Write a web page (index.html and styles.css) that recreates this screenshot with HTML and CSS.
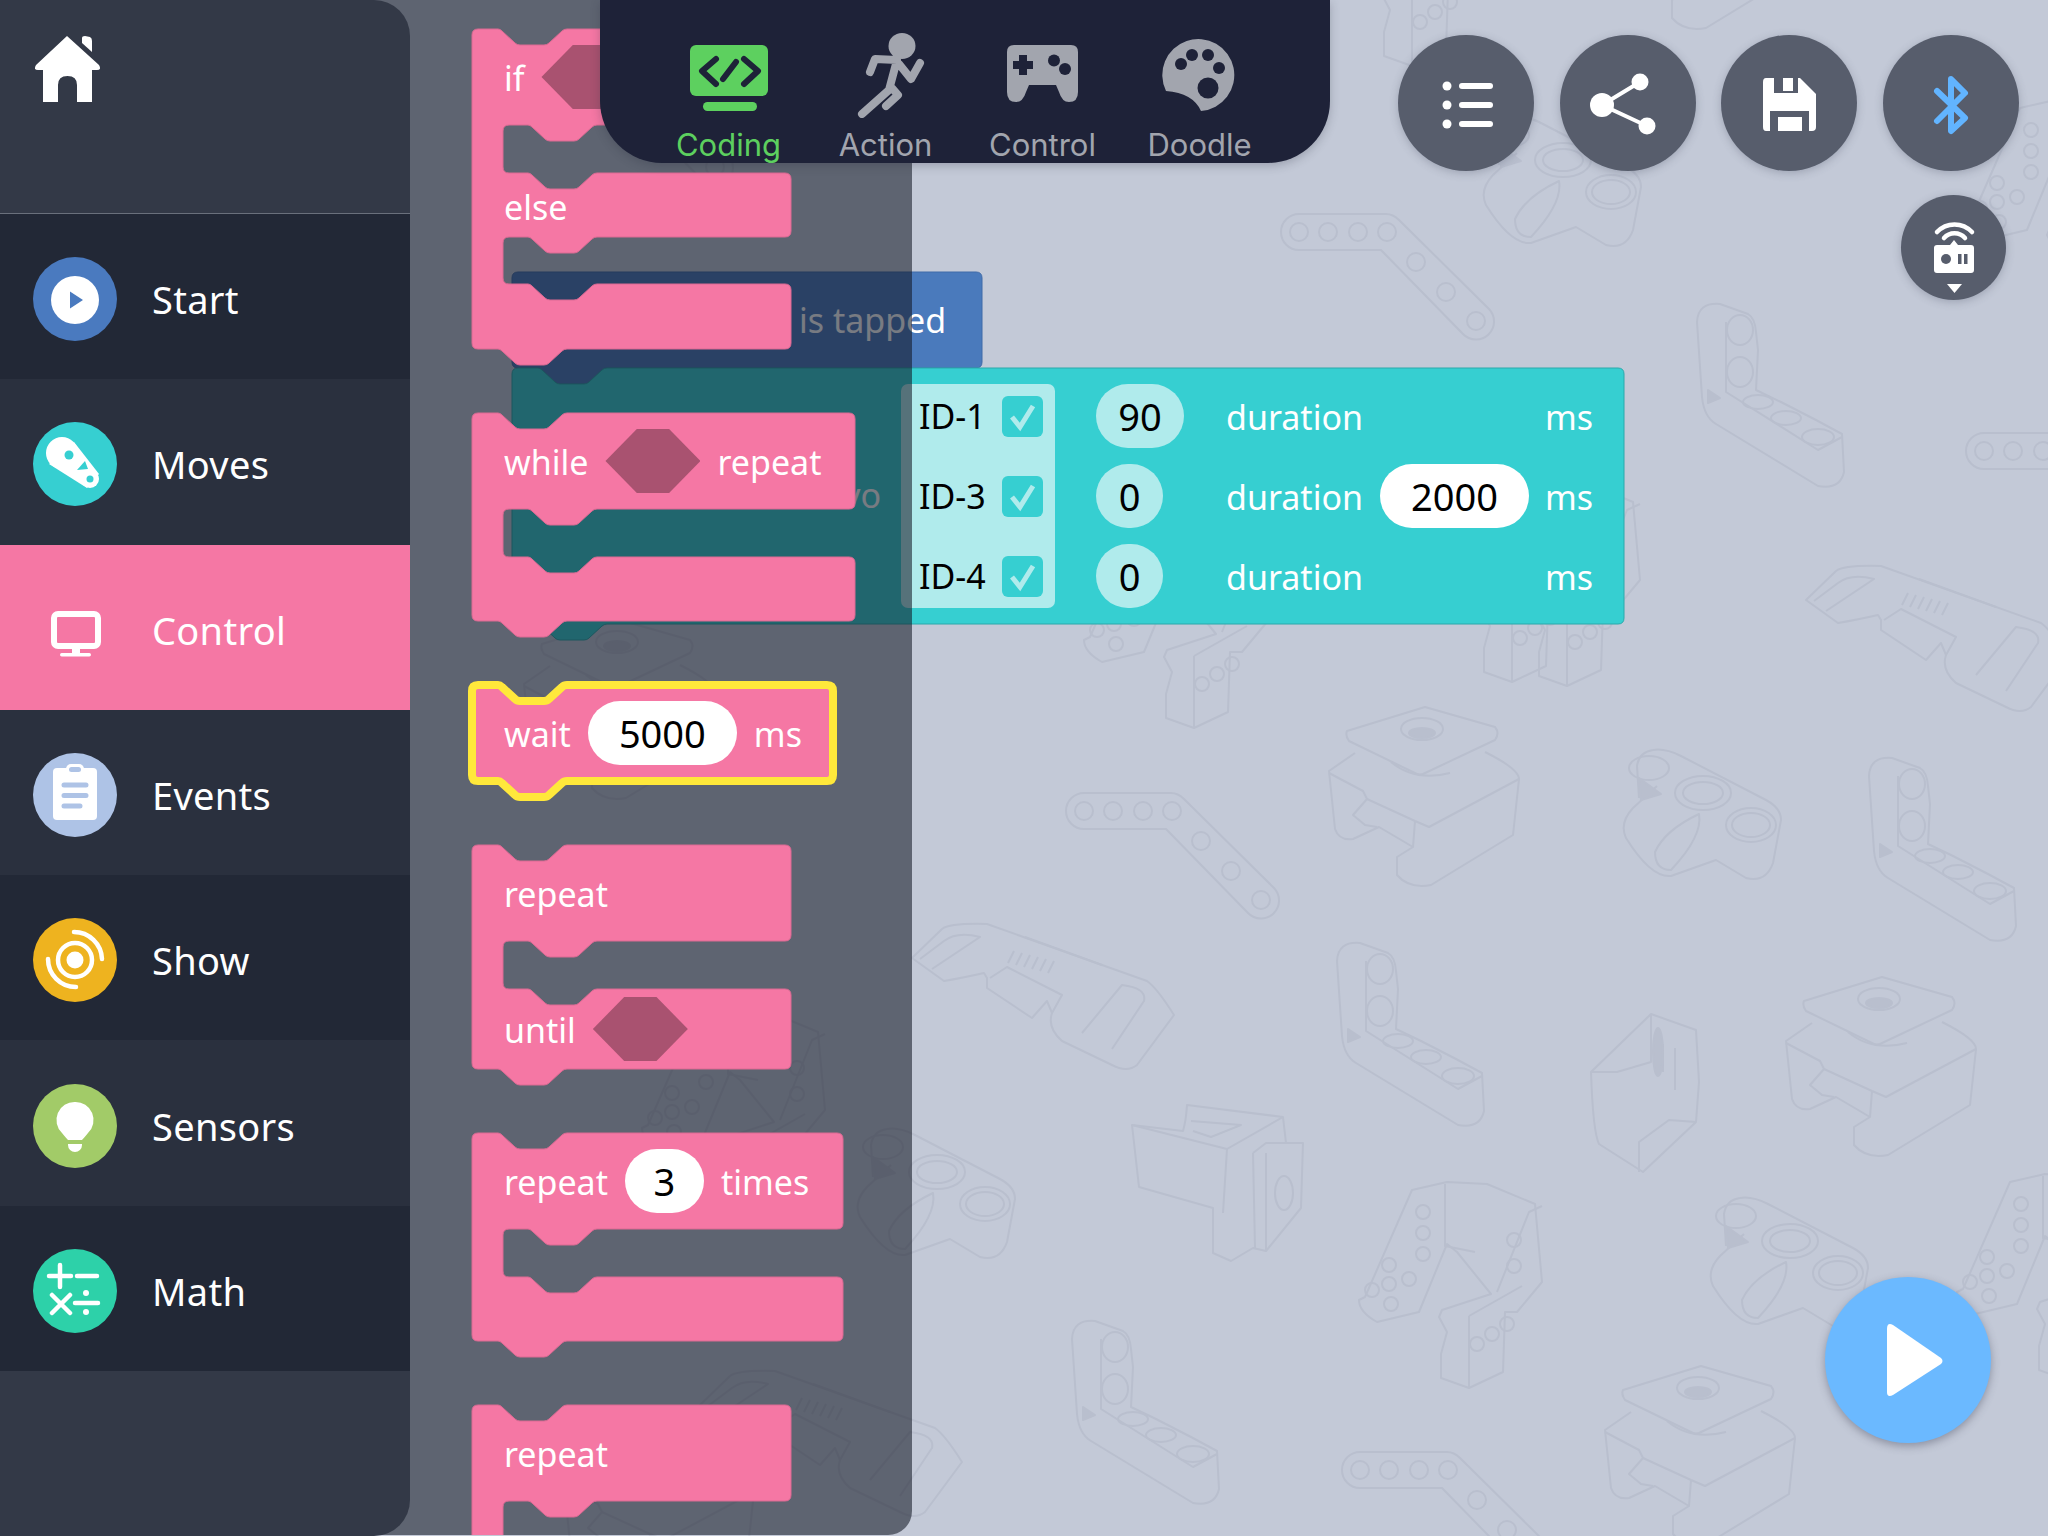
FILE: index.html
```html
<!DOCTYPE html>
<html lang="en">
<head>
  <meta charset="UTF-8">
  <title>Coding</title>
  <link rel="stylesheet" href="styles.css">
</head>
<body>
  <svg class="parts" viewBox="0 0 2048 1536" width="2048" height="1536">
    <defs>
      <g id="beam">
        <path d="M18 0H105Q112 0 118 6L208 95A18 18 0 0 1 182 120L100 36H18A18 18 0 0 1 18 0Z"/>
        <circle cx="18" cy="18" r="9"/><circle cx="47" cy="18" r="9"/><circle cx="77" cy="18" r="9"/><circle cx="106" cy="18" r="9"/>
        <circle cx="135" cy="48" r="9"/><circle cx="165" cy="78" r="9"/><circle cx="195" cy="107" r="9"/>
      </g>
      <g id="servo">
        <path d="M22 24L100 0L170 20Q175 26 170 33L98 67Q95 68 92 67L24 34Q20 28 22 24Z"/>
        <ellipse cx="97" cy="22" rx="21" ry="11"/>
        <ellipse class="solid" cx="97" cy="26" rx="13" ry="5"/>
        <path d="M30 46L4 64L10 122Q14 134 28 132L54 120L88 140L72 150V168Q84 182 106 178L188 128L194 72Q194 62 160 45"/>
        <path d="M4 66L38 84L42 92L90 114L104 120L194 72M90 114L88 140M42 92L28 108L40 118L52 120"/>
        <path d="M66 55Q90 75 125 66"/>
      </g>
      <g id="hub">
        <path d="M18 50L16 18Q18 4 32 2Q44 0 60 8L145 52Q160 60 160 72L152 115Q145 135 125 130L95 112L50 128Q30 130 5 90Q-2 75 12 60L36 38"/>
        <ellipse cx="28" cy="20" rx="20" ry="12"/>
        <ellipse cx="82" cy="45" rx="28" ry="17"/><ellipse cx="82" cy="45" rx="20" ry="11"/>
        <ellipse cx="130" cy="77" rx="25" ry="17"/><ellipse cx="130" cy="77" rx="19" ry="12"/>
        <path d="M78 66Q82 88 50 122Q34 122 34 104Q44 82 78 66Z"/>
        <path class="solid" d="M18 30L40 46L20 52Z"/>
      </g>
      <g id="larm">
        <path d="M1 20Q2 0 24 2L52 12Q59 16 60 30L62 48L60 88L85 100L120 118L146 132L148 170Q144 188 122 184L20 122Q8 115 6 95Z"/>
        <ellipse cx="44" cy="28" rx="13" ry="15"/><ellipse cx="44" cy="70" rx="13" ry="15"/>
        <ellipse cx="62" cy="100" rx="15" ry="7"/><ellipse cx="90" cy="116" rx="15" ry="7"/><ellipse cx="122" cy="135" rx="16" ry="8"/>
        <path d="M30 20V90L122 148L146 135"/>
        <path class="solid" d="M12 88L24 96L12 101Z"/>
      </g>
      <g id="plate">
        <path d="M0 35L30 6Q38 0 75 1L235 58Q245 65 262 92L225 142Q215 150 200 142L150 118Q135 105 140 90L135 78L120 95L75 65V55L72 50Q50 55 32 58Z"/>
        <path d="M8 36L32 18Q45 8 68 14L20 46M113 14L190 42M170 110L210 62Q235 65 232 78L200 126M78 55L95 44L150 72L140 90"/>
        <path d="M102 28L96 40M110 30L104 42M118 32L112 44M126 34L120 46M134 36L128 48M142 38L136 50"/>
      </g>
      <g id="bracket">
        <path d="M1 22L52 28Q55 18 56 2L152 14L155 40L172 40L170 105L135 148L122 145L100 158L82 150V105L8 84Z"/>
        <path d="M1 22L96 46L152 14M96 46L92 110M60 18L110 22L80 34L62 28M122 50L135 40L172 40M122 50L124 145M135 50V148"/>
        <ellipse cx="153" cy="90" rx="9" ry="17"/>
      </g>
      <g id="joint">
        <path d="M8 115L55 8L90 0L130 2L178 22L185 100L160 130L148 130L146 190L112 206L84 196L84 172L90 150L82 135L85 128L134 112L100 70L90 62L62 130L20 140Q2 130 2 118Z"/>
        <path d="M88 2V64L118 70M140 110L172 30L185 24M112 134V205M112 134L165 104"/>
        <circle cx="66" cy="30" r="7"/><circle cx="66" cy="51" r="7"/><circle cx="66" cy="72" r="7"/>
        <circle cx="32" cy="83" r="7"/><circle cx="52" cy="97" r="7"/><circle cx="15" cy="108" r="7"/><circle cx="32" cy="102" r="7"/><circle cx="34" cy="122" r="7"/>
        <circle cx="157" cy="58" r="7"/><circle cx="157" cy="84" r="7"/>
        <circle cx="120" cy="162" r="7"/><circle cx="135" cy="152" r="7"/><circle cx="150" cy="142" r="7"/>
      </g>
      <g id="cube">
        <path d="M0 60L60 2L105 18L108 70L105 110L52 160L8 132Q2 120 0 60Z"/>
        <path d="M60 2V50L26 60L0 60M105 110L78 108L48 130V160M84 36V78M72 32V60"/>
        <ellipse class="solid" cx="67" cy="40" rx="5" ry="24"/>
      </g>
    </defs>
    <use href="#beam" x="1066" y="793"/>
    <use href="#beam" x="1281" y="214"/>
    <use href="#beam" x="1966" y="433"/>
    <use href="#beam" x="1342" y="1452"/>
    <use href="#beam" x="520" y="60"/>
    <use href="#servo" x="1325" y="707"/>
    <use href="#servo" x="1782" y="977"/>
    <use href="#servo" x="1601" y="1366"/>
    <use href="#servo" x="1600" y="-150"/>
    <use href="#servo" x="560" y="1420"/>
    <use href="#servo" x="520" y="620"/>
    <use href="#hub" x="1621" y="748"/>
    <use href="#hub" x="1708" y="1196"/>
    <use href="#hub" x="1481" y="115"/>
    <use href="#hub" x="855" y="1127"/>
    <use href="#larm" x="1336" y="941"/>
    <use href="#larm" x="1868" y="756"/>
    <use href="#larm" x="1696" y="302"/>
    <use href="#larm" x="1071" y="1319"/>
    <use href="#plate" x="912" y="923"/>
    <use href="#plate" x="1806" y="565"/>
    <use href="#plate" x="700" y="1370"/>
    <use href="#bracket" x="1131" y="1103"/>
    <use href="#joint" x="1357" y="1182"/>
    <use href="#joint" x="1955" y="1174"/>
    <use href="#joint" x="1082" y="522"/>
    <use href="#joint" x="1400" y="476"/>
    <use href="#joint" x="1300" y="-140"/>
    <use href="#joint" x="1965" y="100"/>
    <use href="#joint" x="1455" y="480"/>
    <use href="#joint" x="640" y="1010"/>
    <use href="#cube" x="1591" y="1012"/>
  </svg>

  <!-- blocks left on the workspace -->
  <div class="canvas-block tapped-block">
    <svg class="block-shape" width="470" height="96"><path d="M6 0H464Q470 0 470 6V90Q470 96 464 96H95Q92 96 90 98L77 110Q75 112 72 112H48Q45 112 43 110L30 98Q28 96 26 96H6Q0 96 0 90V6Q0 0 6 0Z"/></svg>
    <span class="tapped-label">is tapped</span>
  </div>
  <div class="canvas-block servo-block">
    <svg class="block-shape" width="1112" height="256"><path d="M6 0H26Q28 0 30 2L43 14Q45 16 48 16H72Q75 16 77 14L90 2Q92 0 95 0H1106Q1112 0 1112 6V250Q1112 256 1106 256H95Q92 256 90 258L77 270Q75 272 72 272H48Q45 272 43 270L30 258Q28 256 26 256H6Q0 256 0 250V6Q0 0 6 0Z"/></svg>
    <div class="servo-inner">
      <div class="servo-title">move servo</div>
      <div class="id-panel">
        <div class="id-row"><span>ID-1</span><span class="check"><svg viewBox="0 0 41 41" width="41" height="41"><path d="M10 21L18 31L31 10"/></svg></span></div>
        <div class="id-row"><span>ID-3</span><span class="check"><svg viewBox="0 0 41 41" width="41" height="41"><path d="M10 21L18 31L31 10"/></svg></span></div>
        <div class="id-row"><span>ID-4</span><span class="check"><svg viewBox="0 0 41 41" width="41" height="41"><path d="M10 21L18 31L31 10"/></svg></span></div>
      </div>
      <div class="servo-params">
        <span class="pill pill-light pill-90">90</span><span class="param-text">duration</span><span></span><span class="param-text unit">ms</span>
        <span class="pill pill-light pill-0">0</span><span class="param-text">duration</span><span class="pill pill-white pill-big">2000</span><span class="param-text unit">ms</span>
        <span class="pill pill-light pill-0">0</span><span class="param-text">duration</span><span></span><span class="param-text unit">ms</span>
      </div>
    </div>
  </div>

  <!-- block palette -->
  <div class="flyout">
    <div class="block block-if">
      <svg class="block-shape"><path d="M6 0H26Q28 0 30 2L43 14Q45 16 48 16H72Q75 16 77 14L90 2Q92 0 95 0H313Q319 0 319 6V90Q319 96 313 96H125Q122 96 120 98L107 110Q105 112 102 112H78Q75 112 73 110L60 98Q58 96 56 96H37Q31 96 31 102V138Q31 144 37 144H56Q58 144 60 146L73 158Q75 160 78 160H102Q105 160 107 158L120 146Q122 144 125 144H313Q319 144 319 150V202Q319 208 313 208H125Q122 208 120 210L107 222Q105 224 102 224H78Q75 224 73 222L60 210Q58 208 56 208H37Q31 208 31 214V249Q31 255 37 255H56Q58 255 60 257L73 269Q75 271 78 271H102Q105 271 107 269L120 257Q122 255 125 255H313Q319 255 319 261V314Q319 320 313 320H95Q92 320 90 322L77 334Q75 336 72 336H48Q45 336 43 334L30 322Q28 320 26 320H6Q0 320 0 314V6Q0 0 6 0Z"/></svg>
      <div class="block-row"><span class="label">if</span><span class="hex"></span></div>
      <div class="block-row block-row-short"><span class="label">else</span></div>
    </div>

    <div class="block block-while">
      <svg class="block-shape"><path d="M6 0H26Q28 0 30 2L43 14Q45 16 48 16H72Q75 16 77 14L90 2Q92 0 95 0H377Q383 0 383 6V90Q383 96 377 96H125Q122 96 120 98L107 110Q105 112 102 112H78Q75 112 73 110L60 98Q58 96 56 96H37Q31 96 31 102V138Q31 144 37 144H56Q58 144 60 146L73 158Q75 160 78 160H102Q105 160 107 158L120 146Q122 144 125 144H377Q383 144 383 150V202Q383 208 377 208H95Q92 208 90 210L77 222Q75 224 72 224H48Q45 224 43 222L30 210Q28 208 26 208H6Q0 208 0 202V6Q0 0 6 0Z"/></svg>
      <div class="block-row"><span class="label">while</span><span class="hex"></span><span class="label">repeat</span></div>
    </div>

    <div class="block block-wait">
      <svg class="block-shape"><path d="M6 0H26Q28 0 30 2L43 14Q45 16 48 16H72Q75 16 77 14L90 2Q92 0 95 0H355Q361 0 361 6V90Q361 96 355 96H95Q92 96 90 98L77 110Q75 112 72 112H48Q45 112 43 110L30 98Q28 96 26 96H6Q0 96 0 90V6Q0 0 6 0Z"/></svg>
      <div class="block-row"><span class="label">wait</span><span class="pill pill-white pill-big">5000</span><span class="label">ms</span></div>
    </div>

    <div class="block block-until">
      <svg class="block-shape"><path d="M6 0H26Q28 0 30 2L43 14Q45 16 48 16H72Q75 16 77 14L90 2Q92 0 95 0H313Q319 0 319 6V90Q319 96 313 96H125Q122 96 120 98L107 110Q105 112 102 112H78Q75 112 73 110L60 98Q58 96 56 96H37Q31 96 31 102V138Q31 144 37 144H56Q58 144 60 146L73 158Q75 160 78 160H102Q105 160 107 158L120 146Q122 144 125 144H313Q319 144 319 150V218Q319 224 313 224H95Q92 224 90 226L77 238Q75 240 72 240H48Q45 240 43 238L30 226Q28 224 26 224H6Q0 224 0 218V6Q0 0 6 0Z"/></svg>
      <div class="block-row"><span class="label">repeat</span></div>
      <div class="block-row block-row-until"><span class="label">until</span><span class="hex"></span></div>
    </div>

    <div class="block block-times">
      <svg class="block-shape"><path d="M6 0H26Q28 0 30 2L43 14Q45 16 48 16H72Q75 16 77 14L90 2Q92 0 95 0H365Q371 0 371 6V90Q371 96 365 96H125Q122 96 120 98L107 110Q105 112 102 112H78Q75 112 73 110L60 98Q58 96 56 96H37Q31 96 31 102V138Q31 144 37 144H56Q58 144 60 146L73 158Q75 160 78 160H102Q105 160 107 158L120 146Q122 144 125 144H365Q371 144 371 150V202Q371 208 365 208H95Q92 208 90 210L77 222Q75 224 72 224H48Q45 224 43 222L30 210Q28 208 26 208H6Q0 208 0 202V6Q0 0 6 0Z"/></svg>
      <div class="block-row"><span class="label">repeat</span><span class="pill pill-white pill-3">3</span><span class="label">times</span></div>
    </div>

    <div class="block block-repeat">
      <svg class="block-shape"><path d="M6 0H26Q28 0 30 2L43 14Q45 16 48 16H72Q75 16 77 14L90 2Q92 0 95 0H313Q319 0 319 6V90Q319 96 313 96H125Q122 96 120 98L107 110Q105 112 102 112H78Q75 112 73 110L60 98Q58 96 56 96H37Q31 96 31 102V138Q31 144 37 144H56Q58 144 60 146L73 158Q75 160 78 160H102Q105 160 107 158L120 146Q122 144 125 144H313Q319 144 319 150V202Q319 208 313 208H6Q0 208 0 202V6Q0 0 6 0Z"/></svg>
      <div class="block-row"><span class="label">repeat</span></div>
    </div>
  </div>

  <nav class="sidebar">
    <div class="sidebar-head">
      <svg class="home-icon" viewBox="0 0 135 120" width="135" height="120">
        <path d="M67 36L36 65Q33 70 38 70H43V102H58V85Q58 76 67.5 76Q77 76 77 85V102H92V70H97Q102 70 99 65Z"/>
        <path d="M82 38Q82 36 85 36L90 37Q92 38 92 41V52L82 43Z"/>
      </svg>
    </div>
    <div class="cat cat-dark">
      <svg viewBox="0 0 84 84" width="84" height="84"><circle cx="42" cy="42" r="42" fill="#4a7abf"/><circle cx="42" cy="43" r="24" fill="#fff"/><path d="M37 34.5L50 43L37 51.5Z" fill="#4a7abf"/></svg>
      <span>Start</span>
    </div>
    <div class="cat">
      <svg viewBox="0 0 84 84" width="84" height="84"><circle cx="42" cy="42" r="42" fill="#36cfd1"/><circle cx="29" cy="31" r="16" fill="#fff"/><circle cx="57" cy="57" r="9" fill="#fff"/><path d="M41 20L66 52L54 66L16 42Z" fill="#fff"/><circle cx="36" cy="33" r="4.5" fill="#36cfd1"/><circle cx="57" cy="57" r="3.5" fill="#36cfd1"/><path d="M44 48L52 39L55 47Z" fill="#36cfd1"/></svg>
      <span>Moves</span>
    </div>
    <div class="cat cat-active">
      <svg viewBox="0 0 84 84" width="84" height="84"><rect x="21" y="26" width="44" height="32" rx="4" fill="none" stroke="#fff" stroke-width="6"/><rect x="39" y="60" width="8" height="7" fill="#fff"/><rect x="27" y="65" width="31" height="3.5" rx="1.7" fill="#fff"/></svg>
      <span>Control</span>
    </div>
    <div class="cat">
      <svg viewBox="0 0 84 84" width="84" height="84"><circle cx="42" cy="42" r="42" fill="#aec3e6"/><rect x="20" y="15" width="44" height="52" rx="4" fill="#fff"/><rect x="33" y="11" width="18" height="10" rx="5" fill="#fff"/><rect x="36" y="14" width="12" height="5" rx="2.5" fill="#aec3e6"/><g stroke="#aec3e6" stroke-width="5" stroke-linecap="round"><path d="M31 32H53M31 42.500H53M31 53H47"/></g></svg>
      <span>Events</span>
    </div>
    <div class="cat cat-dark">
      <svg viewBox="0 0 84 84" width="84" height="84"><circle cx="42" cy="42" r="42" fill="#eeb31f"/><circle cx="42" cy="42" r="8.500" fill="#fff"/><g fill="none" stroke="#fff" stroke-width="4.500" stroke-linecap="round"><circle cx="42" cy="42" r="17"/><path d="M41 14A28 28 0 0 1 69 41M15 41A28 28 0 0 0 43 69"/></g></svg>
      <span>Show</span>
    </div>
    <div class="cat">
      <svg viewBox="0 0 84 84" width="84" height="84"><circle cx="42" cy="42" r="42" fill="#a2cb68"/><path d="M42 18A18 18 0 0 1 55 49Q51 54 49 56H35Q33 54 29 49A18 18 0 0 1 42 18Z" fill="#fff"/><path d="M35 60H49V61A7 7 0 0 1 35 61Z" fill="#fff"/></svg>
      <span>Sensors</span>
    </div>
    <div class="cat cat-dark">
      <svg viewBox="0 0 84 84" width="84" height="84"><circle cx="42" cy="42" r="42" fill="#2dd1a9"/><g fill="none" stroke="#fff" stroke-width="4.500" stroke-linecap="round"><path d="M16 27H38M27 16V38M44 27H64M19 46L37 64M37 46L19 64M42 54H65"/></g><circle cx="53" cy="44" r="3" fill="#fff"/><circle cx="53" cy="63" r="3" fill="#fff"/></svg>
      <span>Math</span>
    </div>
  </nav>

  <div class="tabs">
    <div class="tab tab-active">
      <svg viewBox="679 0 100 118" width="100" height="118">
        <rect x="690" y="45" width="78" height="51" rx="6" fill="#5dd05f"/>
        <rect x="703" y="102" width="54" height="9" rx="4.500" fill="#5dd05f"/>
        <g fill="none" stroke="#1e2238" stroke-width="6" stroke-linecap="round" stroke-linejoin="round"><path d="M716 59L702 71L716 84M723 79L736 62M744 59L758 71L744 84"/></g>
      </svg>
      <span>Coding</span>
    </div>
    <div class="tab">
      <svg viewBox="836 0 100 118" width="100" height="118">
        <ellipse cx="902" cy="46" rx="13.500" ry="13" fill="#a2a5ae"/>
        <g fill="none" stroke="#a2a5ae" stroke-width="8" stroke-linecap="round" stroke-linejoin="round"><path d="M870 72L875 59L897 60L889 90L862 114M892 88L898 95L886 106M899 64L911 79L920 63"/></g>
      </svg>
      <span>Action</span>
    </div>
    <div class="tab">
      <svg viewBox="993 0 100 118" width="100" height="118">
        <path fill-rule="evenodd" fill="#a2a5ae" d="M1014 45H1071Q1078 45 1078 52V92Q1078 102 1069 102Q1062 102 1059 92L1056 85H1029L1026 92Q1023 102 1016 102Q1007 102 1007 92V52Q1007 45 1014 45ZM1019 55V61H1013V69H1019V75H1027V69H1033V61H1027V55Z"/>
        <circle cx="1054" cy="60.500" r="6" fill="#1e2238"/><circle cx="1065" cy="69" r="6" fill="#1e2238"/>
      </svg>
      <span>Control</span>
    </div>
    <div class="tab">
      <svg viewBox="1149 0 100 118" width="100" height="118">
        <path fill="#a2a5ae" d="M1165 91A36 36 0 1 1 1200 111Q1192 93 1165 91Z"/>
        <g fill="#1e2238"><circle cx="1180" cy="64" r="6"/><circle cx="1191" cy="55" r="6"/><circle cx="1207" cy="55" r="6"/><circle cx="1218" cy="68" r="6"/><ellipse cx="1207" cy="88" rx="10.500" ry="10.500"/></g>
      </svg>
      <span>Doodle</span>
    </div>
  </div>

  <div class="toolbar">
    <div class="round-btn">
      <svg viewBox="0 0 136 136" width="136" height="136"><g fill="#fff"><circle cx="49" cy="51" r="4.500"/><circle cx="49" cy="70" r="4.500"/><circle cx="49" cy="89" r="4.500"/><rect x="61" y="48" width="34" height="6" rx="3"/><rect x="61" y="67" width="34" height="6" rx="3"/><rect x="61" y="86" width="34" height="6" rx="3"/></g></svg>
    </div>
    <div class="round-btn">
      <svg viewBox="0 0 136 136" width="136" height="136"><path d="M80 47L42 70L87 91" fill="none" stroke="#fff" stroke-width="4"/><circle cx="80" cy="47" r="8.500" fill="#fff"/><circle cx="42" cy="70" r="12" fill="#fff"/><circle cx="87" cy="91" r="8.500" fill="#fff"/></svg>
    </div>
    <div class="round-btn">
      <svg viewBox="1721 35 136 136" width="136" height="136"><path fill="#fff" d="M1766 78H1800L1816 94V127Q1816 131 1812 131H1766Q1763 131 1763 127V82Q1763 78 1766 78Z"/><path fill="#575d6c" d="M1774 78H1798V93H1774ZM1770 111H1809V131H1770Z"/><path fill="#fff" d="M1783 78H1793V91H1783ZM1778 117H1802V131H1778Z"/></svg>
    </div>
    <div class="round-btn">
      <svg viewBox="1883 35 136 136" width="136" height="136"><path d="M1937 91L1965 118L1951 131V79L1965 93L1937 121" fill="none" stroke="#62b4ff" stroke-width="6" stroke-linecap="round" stroke-linejoin="round"/></svg>
    </div>
  </div>
  <div class="round-btn round-btn-small">
    <svg viewBox="1901 195 105 105" width="105" height="105">
      <g fill="none" stroke="#fff" stroke-width="4.500" stroke-linecap="round"><path d="M1937 232A24 24 0 0 1 1972 232M1944 238A14 14 0 0 1 1965 238"/></g>
      <path fill="#fff" d="M1954 240L1958 245H1971Q1974 245 1974 248V270Q1974 273 1971 273H1937Q1934 273 1934 270V248Q1934 245 1937 245H1950Z"/>
      <circle cx="1946" cy="259" r="5" fill="#575d6c"/>
      <rect x="1958" y="254" width="3.500" height="10" fill="#575d6c"/><rect x="1964" y="254" width="3.500" height="10" fill="#575d6c"/>
      <path fill="#fff" d="M1947 284H1962L1954.500 293Z"/>
    </svg>
  </div>

  <div class="play-btn">
    <svg viewBox="0 0 166 166" width="166" height="166"><path fill="#fff" d="M62 52Q62 45 68 48L116 81Q119 84 116 87L68 118Q62 121 62 115Z"/></svg>
  </div>
</body>
</html>
```

FILE: styles.css
```css
html, body {
  margin: 0;
  padding: 0;
}

body {
  position: relative;
  width: 2048px;
  height: 1536px;
  overflow: hidden;
  background-color: #c3c9d7;
  font-family: "Noto Sans", sans-serif;
}

svg {
  display: block;
}

/* background robot parts */
.parts {
  position: absolute;
  top: 0;
  left: 0;
  fill: none;
  stroke: #b9bfce;
  stroke-width: 2;
  stroke-linejoin: round;
}

.parts .solid {
  fill: #b9bfce;
}

/* workspace blocks */
.canvas-block {
  position: absolute;
  left: 512px;
  box-sizing: border-box;
  color: #fff;
  font-size: 34px;
}

.block-shape {
  position: absolute;
  top: 0;
  left: 0;
  width: 100%;
  height: 100%;
  overflow: visible;
}

.tapped-block {
  top: 272px;
  width: 470px;
  height: 96px;
}

.tapped-block .block-shape path {
  fill: #4a7abc;
  stroke: #3f6aa8;
}

.tapped-label {
  position: absolute;
  left: 287px;
  top: 25px;
}

.servo-block {
  top: 368px;
  width: 1112px;
  height: 256px;
}

.servo-block .block-shape path {
  fill: #36cfd1;
  stroke: #2aa9ab;
}

.servo-inner {
  position: relative;
  display: flex;
  padding-top: 16px;
}

.servo-title {
  width: 369px;
  height: 46px;
  margin-right: 20px;
  margin-top: 88px;
  text-align: right;
}

.id-panel {
  display: flex;
  flex-direction: column;
  gap: 16px;
  width: 154px;
  box-sizing: border-box;
  padding: 0 12px 0 18px;
  border-radius: 7px;
  background-color: #b0ebec;
  color: #000;
}

.id-row {
  display: flex;
  align-items: center;
  justify-content: space-between;
  height: 64px;
}

.check {
  width: 41px;
  height: 41px;
  border-radius: 6px;
  background-color: #36cfd1;
}

.check path {
  fill: none;
  stroke: #b0ebec;
  stroke-width: 5;
}

.servo-params {
  display: grid;
  grid-template-columns: 130px 154px 149px auto;
  grid-auto-rows: 64px;
  row-gap: 16px;
  align-items: center;
  margin-left: 41px;
}

.param-text {
  padding-top: 2px;
}

.unit {
  margin-left: 16px;
}

.pill {
  display: flex;
  align-items: center;
  justify-content: center;
  height: 64px;
  border-radius: 32px;
  color: #000;
  font-size: 38px;
}

.pill-light {
  background-color: #b0ebec;
}

.pill-white {
  background-color: #fff;
}

.pill-90 {
  width: 88px;
}

.pill-0 {
  width: 67px;
}

.pill-big {
  width: 149px;
}

.pill-3 {
  width: 79px;
}

/* palette */
.flyout {
  position: absolute;
  top: 0;
  left: 0;
  width: 912px;
  height: 1535px;
  box-sizing: border-box;
  padding: 29px 0 0 472px;
  display: flex;
  flex-direction: column;
  gap: 64px;
  overflow: hidden;
  border-bottom-right-radius: 24px;
  background-color: rgba(18, 22, 36, 0.57);
}

.block {
  position: relative;
  flex: none;
  color: #fff;
  font-size: 34px;
}

.block .block-shape path {
  fill: #f577a4;
  stroke: #dc6a93;
}

.block-if {
  width: 319px;
  height: 320px;
}

.block-while {
  width: 383px;
  height: 208px;
}

.block-wait {
  width: 361px;
  height: 96px;
}

.block-wait .block-shape path {
  stroke: #ffe83b;
  stroke-width: 8;
}

.block-until {
  width: 319px;
  height: 224px;
}

.block-times {
  width: 371px;
  height: 208px;
}

.block-repeat {
  width: 319px;
  height: 208px;
}

.block-row {
  position: relative;
  display: flex;
  align-items: center;
  gap: 17px;
  height: 96px;
  padding-left: 32px;
}

.block-row-short {
  height: 65px;
  margin-top: 48px;
}

.block-row-until {
  height: 80px;
  margin-top: 48px;
}

.label {
  padding-top: 2px;
}

.hex {
  width: 95px;
  height: 64px;
  background-color: #a95270;
  clip-path: polygon(33% 0, 67% 0, 100% 50%, 67% 100%, 33% 100%, 0 50%);
}

/* left menu */
.sidebar {
  position: absolute;
  top: 0;
  left: 0;
  width: 410px;
  height: 1536px;
  overflow: hidden;
  border-radius: 0 36px 36px 0;
  background-color: #333947;
  color: #fff;
  font-size: 38px;
  letter-spacing: 0.3px;
}

.sidebar-head {
  height: 214px;
  box-sizing: border-box;
  border-bottom: 1px solid #6a707c;
}

.home-icon path {
  fill: #fff;
}

.cat {
  display: flex;
  align-items: center;
  gap: 35px;
  height: 165.3px;
  box-sizing: border-box;
  padding: 5px 0 0 33px;
  background-color: #2a303e;
}

.cat-dark {
  background-color: #222836;
}

.cat-active {
  background-color: #f577a4;
}

/* top tabs */
.tabs {
  position: absolute;
  top: 0;
  left: 600px;
  width: 730px;
  height: 163px;
  box-sizing: border-box;
  padding-left: 50px;
  display: flex;
  border-radius: 0 0 62px 62px;
  background-color: #1e2238;
  box-shadow: 0 3px 10px rgba(40, 44, 60, 0.25);
  color: #a2a5ae;
  font-family: Inter, sans-serif;
  font-size: 31px;
}

.tab {
  width: 157px;
  display: flex;
  flex-direction: column;
  align-items: center;
}

.tab-active {
  color: #5dd05f;
}

.tab span {
  margin-top: 8px;
}

/* right buttons */
.toolbar {
  position: absolute;
  top: 35px;
  left: 1398px;
  display: flex;
  gap: 25.500px;
}

.round-btn {
  width: 136px;
  height: 136px;
  border-radius: 50%;
  background-color: #575d6c;
  box-shadow: 0 2px 8px rgba(70, 76, 95, 0.3);
}

.round-btn-small {
  position: absolute;
  top: 195px;
  left: 1901px;
  width: 105px;
  height: 105px;
}

.play-btn {
  position: absolute;
  top: 1277px;
  left: 1825px;
  width: 166px;
  height: 166px;
  border-radius: 50%;
  background-color: #6bb9ff;
  box-shadow: 0 3px 8px rgba(70, 76, 95, 0.45);
}
```
